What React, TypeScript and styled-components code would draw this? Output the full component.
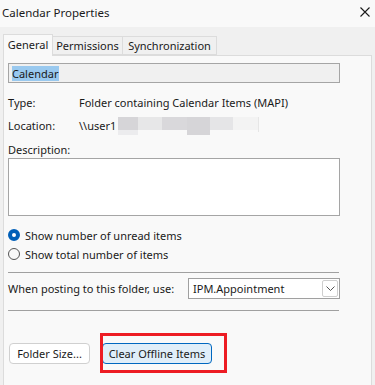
import styled, { createGlobalStyle } from 'styled-components';

const GlobalStyle = createGlobalStyle`
  html, body {
    margin: 0;
    padding: 0;
    background: #f0f0f0;
  }
  body {
    font-family: 'Segoe UI', 'Noto Sans', sans-serif;
    font-size: 11px;
    color: #1a1a1a;
  }
`;

function App() {
	return (
		<Window>
			<GlobalStyle />
			<TitleBar>
				<Title>Calendar Properties</Title>
				<CloseButton>
					<svg width="10" height="10" viewBox="0 0 10 10">
						<path d="M0.5 0.5 L9.5 9.5 M9.5 0.5 L0.5 9.5" stroke="#1a1a1a" strokeWidth="1.1" />
					</svg>
				</CloseButton>
			</TitleBar>

			<Body>
				<Tabs>
					<Tab active width={50}>General</Tab>
					<Tab width={70}>Permissions</Tab>
					<Tab width={94}>Synchronization</Tab>
				</Tabs>

				<Panel>
					<NameField>
						<Selected>Calendar</Selected>
					</NameField>

					<InfoRow top={11}>
						<Label>Type:</Label>
						<Value>Folder containing Calendar Items (MAPI)</Value>
					</InfoRow>
					<InfoRow top={7}>
						<Label>Location:</Label>
						<Value>
							\\user1
							<Mosaic />
						</Value>
					</InfoRow>

					<DescLabel>Description:</DescLabel>
					<DescBox />

					<RadioRow top={10}>
						<Radio checked />
						<span>Show number of unread items</span>
					</RadioRow>
					<RadioRow top={1}>
						<Radio />
						<span>Show total number of items</span>
					</RadioRow>

					<Separator top={9} />
					<PostRow>
						<span>When posting to this folder, use:</span>
						<Select>
							<span>IPM.Appointment</span>
							<DropButton>
								<svg width="9" height="5" viewBox="0 0 9 5">
									<path d="M0.5 0.5 L4.5 4.5 L8.5 0.5" fill="none" stroke="#555" strokeWidth="1" />
								</svg>
							</DropButton>
						</Select>
					</PostRow>
					<Separator top={11} />

					<ButtonRow>
						<Button width={81}>Folder Size...</Button>
						<Highlight>
							<Button primary width={110}>Clear Offline Items</Button>
						</Highlight>
					</ButtonRow>
				</Panel>
			</Body>
		</Window>
	);
}

export default App;

function Mosaic() {
	return (
		<MosaicSvg width="142" height="19" viewBox="0 0 142 19">
			<rect x="0" y="0" width="20" height="13" fill="#d6d5d8" />
			<rect x="0" y="13" width="20" height="5" fill="#ececee" />
			<rect x="20" y="0" width="24" height="13" fill="#e7e7e8" />
			<rect x="44" y="0" width="25" height="13" fill="#d9d8db" />
			<rect x="69" y="0" width="23" height="18" fill="#d6d5d8" />
			<rect x="92" y="0" width="23" height="13" fill="#e5e5e7" />
			<rect x="115" y="0" width="25" height="13" fill="#f3f3f3" />
			<rect x="140" y="0" width="1" height="15" fill="#e6e6e6" />
		</MosaicSvg>
	);
}

const Window = styled.div`
  width: 375px;
  height: 385px;
  overflow: hidden;
  background: #f0f0f0;
`;

const TitleBar = styled.div`
  height: 27px;
  display: flex;
  align-items: center;
  justify-content: space-between;
  padding: 0 5px 0 2px;
  background: #f9f9f9;
  box-sizing: border-box;
`;

const Title = styled.div`
  font-size: 11.5px;
  margin-top: -3px;
`;

const CloseButton = styled.div`
  display: flex;
  margin-top: -3px;
`;

const Body = styled.div`
  padding: 7px 0 0 3px;
`;

const Tabs = styled.div`
  display: flex;
  align-items: flex-end;
  height: 21px;
  position: relative;
  z-index: 1;
`;

const Tab = styled.div<{ active?: boolean; width: number }>`
  box-sizing: border-box;
  width: ${p => p.width}px;
  height: ${p => (p.active ? '22px' : '19px')};
  margin-bottom: ${p => (p.active ? '-1px' : '0')};
  padding-top: ${p => (p.active ? '2px' : '1px')};
  text-align: center;
  background: ${p => (p.active ? '#f9f9f9' : '#f0f0f0')};
  border: 1px solid #dcdcdc;
  border-bottom: ${p => (p.active ? 'none' : '1px solid #dcdcdc')};
  border-left: ${p => (p.active ? '1px solid #dcdcdc' : 'none')};
  white-space: nowrap;
`;

const Panel = styled.div`
  width: 369px;
  height: 340px;
  box-sizing: border-box;
  background: #f9f9f9;
  border: 1px solid #dcdcdc;
  padding: 7px 0 0 4px;
  display: flex;
  flex-direction: column;
`;

const NameField = styled.div`
  width: 332px;
  height: 20px;
  box-sizing: border-box;
  border: 1px solid #a5a5a5;
  background: #f0f0f0;
  padding: 2px 0 0 3px;
  display: flex;
`;

const Selected = styled.span`
  background: #99c9ef;
  line-height: 15px;
  height: 15px;
  padding-right: 1px;
`;

const InfoRow = styled.div<{ top: number }>`
  display: flex;
  align-items: center;
  height: 16px;
  margin-top: ${p => p.top}px;
`;

const Label = styled.span`
  width: 71px;
`;

const Value = styled.span`
  display: flex;
  align-items: center;
  white-space: nowrap;
`;

const MosaicSvg = styled.svg`
  display: block;
  margin: 3px 0 0 2px;
`;

const DescLabel = styled.div`
  margin-top: 9px;
  height: 16px;
  line-height: 16px;
`;

const DescBox = styled.div`
  width: 332px;
  height: 58px;
  box-sizing: border-box;
  border: 1px solid #a5a5a5;
  background: #ffffff;
`;

const RadioRow = styled.div<{ top: number }>`
  display: flex;
  align-items: center;
  gap: 5px;
  height: 18px;
  margin-top: ${p => p.top}px;
`;

const Radio = styled.span<{ checked?: boolean }>`
  width: 12px;
  height: 12px;
  box-sizing: border-box;
  border-radius: 50%;
  flex-shrink: 0;
  background: ${p => (p.checked ? '#ffffff' : '#f9f9f9')};
  border: ${p => (p.checked ? '4px solid #005fb8' : '1px solid #555555')};
`;

const Separator = styled.div<{ top: number }>`
  width: 331px;
  height: 1px;
  background: #a0a0a0;
  margin-top: ${p => p.top}px;
`;

const PostRow = styled.div`
  display: flex;
  align-items: center;
  justify-content: space-between;
  width: 332px;
  margin-top: 4px;
  padding-top: 1px;
  white-space: nowrap;
`;

const Select = styled.div`
  width: 152px;
  height: 21px;
  box-sizing: border-box;
  border: 1px solid #a0a0a0;
  background: #ffffff;
  display: flex;
  align-items: center;
  justify-content: space-between;
  padding: 0 1px 0 4px;
`;

const DropButton = styled.div`
  width: 16px;
  height: 17px;
  box-sizing: border-box;
  border: 1px solid #cfcfcf;
  border-radius: 2px;
  display: flex;
  align-items: center;
  justify-content: center;
`;

const ButtonRow = styled.div`
  display: flex;
  gap: 12px;
  margin-top: 32px;
  padding-left: 1px;
`;

const Button = styled.button<{ primary?: boolean; width: number }>`
  font: inherit;
  color: #1a1a1a;
  width: ${p => p.width}px;
  height: 21px;
  padding: 0;
  border-radius: 4px;
  background: ${p => (p.primary ? '#e0eef9' : '#ffffff')};
  border: 1px solid ${p => (p.primary ? '#0067c0' : '#d0d0d0')};
`;

const Highlight = styled.div`
  position: relative;
  display: flex;

  &::after {
    content: '';
    position: absolute;
    top: -10px;
    left: -2px;
    right: -15px;
    bottom: -9px;
    border: 3px solid #ed1c24;
    pointer-events: none;
  }
`;
